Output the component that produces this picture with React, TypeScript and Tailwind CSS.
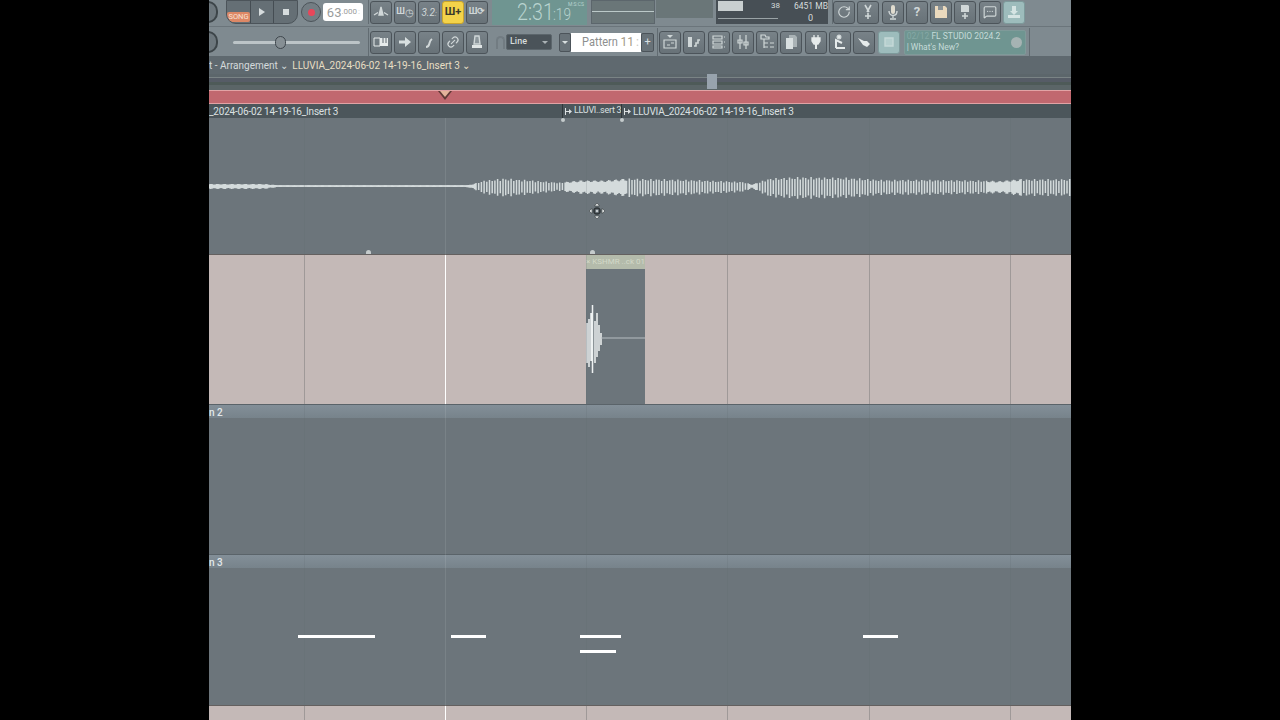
import { FC, ReactNode } from "react";
import { Link2, MessageSquareMore, RotateCw } from "lucide-react";

const FONT = "font-['Roboto',sans-serif]";

// fake waveform, built from an envelope of [x, amplitude] points
const ENVELOPE: [number, number][] = [
  [0, 3], [55, 3], [70, 1], [255, 1], [262, 2], [275, 8], [295, 11], [325, 8], [350, 5],
  [372, 8], [395, 8], [420, 11], [480, 9], [535, 6], [543, 2], [560, 11], [590, 13], [640, 12],
  [672, 9], [720, 9], [775, 8], [790, 7], [812, 10], [862, 10],
];

const ampAt = (x: number) => {
  for (let i = 1; i < ENVELOPE.length; i++) {
    const [x0, a0] = ENVELOPE[i - 1];
    const [x1, a1] = ENVELOPE[i];
    if (x <= x1) return a0 + ((a1 - a0) * (x - x0)) / (x1 - x0);
  }
  return 1;
};

const buildWave = () => {
  let d = "";
  let x = 0;
  while (x < 862) {
    const base = ampAt(x);
    const a = base * (0.85 + 0.15 * Math.sin(x * 0.9));
    d += `M${x.toFixed(1)} ${(14 - a * 0.7).toFixed(1)}V${(14 + a).toFixed(1)}`;
    const dense = base < 4 || (x > 355 && x < 417) || (x > 775 && x < 812);
    x += dense ? 1.5 : 2.7;
  }
  return d;
};

const ToolButton: FC<{ children?: ReactNode; tone?: "dark" | "yellow" | "teal" }> = ({ children, tone = "dark" }) => (
  <div
    className={`flex h-[23px] w-[22px] shrink-0 items-center justify-center rounded-[3px] border text-[10px] font-bold ${
      tone === "yellow"
        ? "border-[#c9a52c] bg-[#f3d34a] text-[#3b3a2c]"
        : tone === "teal"
          ? "border-[#7d9a9b] bg-[#9dbcbc] text-[#d5e4e3]"
          : "border-[#4c545a] bg-gradient-to-b from-[#788288] to-[#687278] text-[#d0d7d8]"
    }`}
  >
    {children}
  </div>
);

const Knob: FC = () => (
  <div className="ml-[-11px] h-[22px] w-[20px] shrink-0 rounded-full border-2 border-[#3d4549] bg-[#6d777d]" />
);

const Icon: FC<{ children: ReactNode }> = ({ children }) => (
  <svg viewBox="0 0 16 16" className="h-[16px] w-[16px]" fill="none" stroke="#d0d7d8" strokeWidth="1.4">
    {children}
  </svg>
);

const Toolbar: FC = () => (
  <div className={`flex h-[56px] shrink-0 flex-col bg-[#7f8a90] ${FONT}`}>
    {/* first row */}
    <div className="flex h-[27px] items-center border-b border-[#6b757b] pb-[2px]">
      <Knob />
      <div className="ml-[8px] flex h-[24px] w-[72px] overflow-hidden rounded-b-[10px] border border-[#4c545a] bg-[#656f75]">
        <div className="flex w-[24px] items-end justify-center border-r border-[#454d53] pb-[1px]">
          <span className="rounded-[2px] bg-[#dd8866] px-[1px] text-[7.5px] leading-[10px] text-[#f8e3d6]">SONG</span>
        </div>
        <div className="flex w-[23px] items-center justify-center border-r border-[#454d53]">
          <div className="h-0 w-0 border-y-[4px] border-l-[6px] border-y-transparent border-l-[#d6dcdd]" />
        </div>
        <div className="flex flex-1 items-center justify-center">
          <div className="h-[6px] w-[6px] bg-[#d6dcdd]" />
        </div>
      </div>
      <div className="ml-[3px] flex h-[20px] w-[20px] items-center justify-center rounded-full border border-[#4c545a] bg-[#737d83]">
        <div className="h-[7px] w-[7px] rounded-full bg-[#e8465a]" />
      </div>
      <div className="ml-[2px] flex h-[18px] w-[40px] items-center justify-end rounded-[3px] bg-white pr-[3px] text-[#9a9c9c]">
        <span className="text-[13px] leading-none">63</span>
        <span className="text-[8px] leading-none">.000</span>
        <span className="ml-[1px] text-[8px] leading-none text-[#c9cccc]">:</span>
      </div>
      <div className="ml-[5px] h-full w-px bg-[#626c72]" />
      <div className="ml-[1px] flex w-[121px] gap-[2px]">
        <ToolButton>
          <Icon>
            <path d="M1 11 5 8.500M15 11l-4-2.500" />
            <path d="M8 3l2 8H6z" fill="#d0d7d8" />
          </Icon>
        </ToolButton>
        <ToolButton>
          <span className="flex items-center text-[9px]">
            Ш<span className="text-[10px] font-normal">◷</span>
          </span>
        </ToolButton>
        <ToolButton>
          <span className="text-[10px] font-normal italic">
            3.2<span className="text-[7px]">:</span>
          </span>
        </ToolButton>
        <ToolButton tone="yellow">
          <span className="text-[11px]">Ш+</span>
        </ToolButton>
        <ToolButton>
          <span className="flex items-center text-[9px]">
            Ш<span className="text-[9px]">⟳</span>
          </span>
        </ToolButton>
      </div>
      {/* clock */}
      <div className="relative ml-[1px] flex h-[25px] w-[95px] items-start bg-[#6f9591] pl-[25px] text-[#b8d3cf]">
        <span className="origin-left scale-x-[0.82] text-[24px] leading-[24px] font-light">2:31</span>
        <span className="ml-[-9px] mt-[6px] origin-left scale-x-[0.85] text-[16px] leading-[18px] font-light">:19</span>
        <span className="absolute right-[3px] top-[1px] text-[5px] leading-[6px]">M:S:CS</span>
      </div>
      <div className="ml-[4px] flex h-[24px] w-[64px] items-center border border-[#5c666c] bg-[#6a7678]">
        <div className="mt-[-2px] h-px w-full bg-[#bcc9c9]" />
      </div>
      <div className="ml-px h-[18px] w-[57px] self-start bg-[#6a7678]" />
      <div className="ml-[3px] flex h-[24px] w-[112px] flex-col whitespace-nowrap bg-[#474f55] text-[#d6dcdc]">
        <div className="flex h-[12px] items-center">
          <div className="ml-[2px] h-[10px] w-[25px] bg-[#c9cfd0]" />
          <span className="ml-[28px] text-[8px] leading-none">38</span>
          <span className="ml-[14px] text-[8.5px] leading-none">6451 MB</span>
        </div>
        <div className="flex h-[12px] items-center pr-[15px]">
          <div className="ml-[2px] mr-auto h-px w-[60px] bg-[#9aa3a6]" />
          <span className="text-[9px] leading-none">0</span>
        </div>
      </div>
      <div className="ml-[4px] h-full w-px bg-[#626c72]" />
      <div className="flex gap-[2.300px]">
        <ToolButton>
          <RotateCw size={14} strokeWidth={2} />
        </ToolButton>
        <ToolButton>
          <Icon>
            <path d="M5 1l4 7M11 1 7 8M8 9v6M5 12h6" strokeWidth="1.6" />
          </Icon>
        </ToolButton>
        <ToolButton>
          <Icon>
            <rect x="6" y="1" width="4" height="9" rx="2" fill="#e0dccf" stroke="none" />
            <path d="M4 7c0 6 8 6 8 0M8 11v3M5 15h6" />
          </Icon>
        </ToolButton>
        <ToolButton>
          <span className="text-[13px]">?</span>
        </ToolButton>
        <ToolButton>
          <Icon>
            <path d="M2 2h10l2 2v10H2z" fill="#ead9bd" stroke="none" />
            <path d="M5 2h5v4H5z" fill="#8a9296" stroke="none" />
          </Icon>
        </ToolButton>
        <ToolButton>
          <Icon>
            <path d="M4 1h7l1 1v6H4z" fill="#d0d7d8" stroke="none" />
            <path d="M8 9v6M5 12h6" strokeWidth="1.6" />
          </Icon>
        </ToolButton>
        <ToolButton>
          <MessageSquareMore size={14} strokeWidth={2} />
        </ToolButton>
        <ToolButton tone="teal">
          <Icon>
            <path d="M6 2h4v5h2l-4 4-4-4h2z" fill="#d5e4e3" stroke="none" />
            <path d="M2 11h12v3H2z" fill="#d5e4e3" stroke="none" />
          </Icon>
        </ToolButton>
      </div>
    </div>

    {/* second row */}
    <div className="flex h-[29px] items-center pt-[1px]">
      <Knob />
      <div className="relative ml-[15px] h-[3px] w-[127px] rounded-full bg-[#bcc4c7]">
        <div className="absolute left-[42px] top-[-5px] h-[13px] w-[11px] rounded-full border border-[#3f474d] bg-[#868f94]" />
      </div>
      <div className="ml-[8px] h-full w-px bg-[#626c72]" />
      <div className="ml-[1px] flex gap-[2px]">
        <ToolButton>
          <Icon>
            <path d="M1 4h6v8H1z" stroke="#e6ebeb" strokeWidth="1" />
            <path d="M7 4h8v8H7z" fill="#e6ebeb" stroke="none" />
            <path d="M10 4v5M13 4v5" stroke="#5f696f" strokeWidth="1" />
          </Icon>
        </ToolButton>
        <ToolButton>
          <Icon>
            <path d="M2 6.500h6V3l6 5-6 5V9.500H2z" fill="#d8dfe0" stroke="none" />
          </Icon>
        </ToolButton>
        <ToolButton>
          <Icon>
            <path d="M5 13c3 0 3-2 3.500-4s1-3 2.500-4" strokeWidth="2" />
          </Icon>
        </ToolButton>
        <ToolButton>
          <Link2 size={14} strokeWidth={2} className="-rotate-45" />
        </ToolButton>
        <ToolButton>
          <Icon>
            <path d="M6 2h4l1 8H5z" fill="#8d979c" />
            <path d="M3 14h10v-3H3z" fill="#e0e5e5" stroke="none" />
          </Icon>
        </ToolButton>
      </div>
      <div className="ml-[8px] h-[13px] w-[9px] rounded-t-full border-2 border-b-0 border-[#727c82]" />
      <div className="ml-[1px] flex h-[16px] w-[46px] items-center justify-between rounded-[2px] border border-[#5c666c] bg-[#4a5359] px-[3px] text-[#d6dcdc]">
        <span className="text-[9px] font-medium">Line</span>
        <div className="h-0 w-0 border-x-[3px] border-t-[3px] border-x-transparent border-t-[#aab2b5]" />
      </div>
      <div className="ml-[7px] flex h-[19px] w-[12px] items-center justify-center rounded-[2px] border border-[#4c545a] bg-[#687278]">
        <div className="h-0 w-0 border-x-[3px] border-t-[3px] border-x-transparent border-t-[#d8dfe0]" />
      </div>
      <div className="flex h-[19px] w-[70px] items-center justify-end whitespace-nowrap bg-white pr-[2px] text-[12px] text-[#8d8f8f]">
        <span className="origin-right scale-x-[0.92]">Pattern</span>
        <span className="ml-[3px] text-[#a39a85]">11</span>
        <span className="ml-[2px] text-[#c9c9c0]">:</span>
      </div>
      <div className="flex h-[19px] w-[13px] items-center justify-center rounded-[2px] border border-[#4c545a] bg-[#687278] text-[11px] text-[#d8dfe0]">
        +
      </div>
      <div className="ml-[3px] h-full w-px bg-[#626c72]" />
      <div className="ml-[1px] flex gap-[2.300px]">
        <ToolButton>
          <Icon>
            <path d="M2 6h12v8H2zM5 11h3M9 9h3" strokeWidth="1.2" />
            <path d="M5 1h6L8 4z" fill="#d0d7d8" stroke="none" />
          </Icon>
        </ToolButton>
        <ToolButton>
          <Icon>
            <path d="M2 3h4v10H2z" fill="#d0d7d8" stroke="none" />
            <path d="M8 12h2V9h2V6h2" strokeWidth="1.6" />
          </Icon>
        </ToolButton>
        <ToolButton>
          <Icon>
            <path d="M2 2h9v3H2zM2 7h9v3H2zM2 12h9v2H2zM13 3h1M13 8h1M13 13h1" strokeWidth="1.2" />
          </Icon>
        </ToolButton>
        <ToolButton>
          <Icon>
            <path d="M5 1v14M11 1v14M3 6h4v3H3zM9 8h4v3H9z" strokeWidth="1.2" />
          </Icon>
        </ToolButton>
        <ToolButton>
          <Icon>
            <path d="M2 1h4l1 2h3v2H2zM5 5v9M5 9h4M5 13h4M11 9h4M11 13h4" strokeWidth="1.2" />
          </Icon>
        </ToolButton>
        <ToolButton>
          <Icon>
            <path d="M6 1h6l2 2v10H6z" fill="#aab3b6" stroke="none" />
            <path d="M3 4h7v11H3z" fill="#d8dfe0" stroke="none" />
          </Icon>
        </ToolButton>
        <ToolButton>
          <Icon>
            <path d="M6 1v3M10 1v3M4 4h8v3l-2 3H6L4 7z" fill="#e6ebeb" stroke="#e6ebeb" strokeWidth="1.3" />
            <path d="M8 10v5" stroke="#e6ebeb" strokeWidth="2" />
          </Icon>
        </ToolButton>
        <ToolButton>
          <Icon>
            <circle cx="7" cy="3" r="1.800" fill="#e6ebeb" />
            <path d="M4 14V6l6 3M4 14h9" strokeWidth="2" stroke="#e6ebeb" />
          </Icon>
        </ToolButton>
        <ToolButton>
          <Icon>
            <path d="M2 4l6 3h3l3 3-3 3-4-2z" fill="#e6ebeb" stroke="none" />
          </Icon>
        </ToolButton>
        <ToolButton tone="teal">
          <Icon>
            <path d="M4 4h8v8H4z" fill="#b5cfce" stroke="#c5d9d8" />
          </Icon>
        </ToolButton>
      </div>
      <div className="ml-[4px] flex h-[25px] w-[122px] items-center justify-between rounded-[2px] border border-[#7f9a99] bg-[#6f9591] pl-[2px] pr-[3px] text-[#c5dbd8]">
        <div className="flex flex-col whitespace-nowrap text-[8.5px] leading-[11px]">
          <span>
            <span className="text-[#85a8a5]">02/12</span> FL STUDIO 2024.2
          </span>
          <span>| What's New?</span>
        </div>
        <div className="h-[11px] w-[11px] rounded-full bg-[#a6b3b3]" />
      </div>
      <div className="ml-[3px] h-full w-px bg-[#626c72]" />
    </div>
  </div>
);

const GRID_LINES = [95, 377, 518, 660, 801];

// vertical beat lines and the playhead, laid over the lanes
const GridOverlay: FC = () => (
  <div className="pointer-events-none absolute inset-0">
    {GRID_LINES.map((x) => (
      <div key={x} className="absolute inset-y-0 w-px bg-[#5f686e30]" style={{ left: x }} />
    ))}
    <div className="absolute inset-y-0 left-[236px] w-px bg-[#ffffff18]" />
  </div>
);

const TrackHeader: FC<{ label: string }> = ({ label }) => (
  <div className="flex h-[14px] shrink-0 items-center border-t border-[#5a6369] bg-gradient-to-b from-[#838f98] to-[#77838b] pt-[1px] text-[10px] font-medium text-[#e3e8ea]">
    {label}
  </div>
);

const Marker: FC<{ className: string }> = ({ className }) => (
  <div className={`absolute h-[4px] w-[5px] rounded-t-full bg-[#c5cbcc] ${className}`} />
);

const MoveCursor: FC = () => (
  <svg viewBox="0 0 18 18" className="absolute left-[379px] top-[84px] h-[18px] w-[18px]">
    <path d="M9 1 11.500 4H6.500zM9 17 6.500 14h5zM1 9 4 6.500v5zM17 9 14 11.500v-5z" fill="#f2f5f5" stroke="#2f3538" strokeWidth="0.6" />
    <circle cx="9" cy="9" r="3" fill="none" stroke="#2f3538" strokeWidth="1.6" />
    <circle cx="9" cy="9" r="1" fill="#e5e9e9" />
  </svg>
);

const ClipArrow: FC = () => (
  <svg viewBox="0 0 7 7" className="mr-[2px] h-[7px] w-[7px] shrink-0" fill="#dbe0e1">
    <path d="M0 0h1v7H0zM1 3h3V1l3 2.500L4 6V4H1z" />
  </svg>
);

const Lane: FC<{ height: string; children?: ReactNode }> = ({ height, children }) => (
  <div className={`relative shrink-0 bg-[#6c757b] ${height}`}>{children}</div>
);

const Note: FC<{ className: string }> = ({ className }) => <div className={`absolute z-10 h-[3px] bg-white ${className}`} />;

const PinkLane: FC<{ className: string; children?: ReactNode }> = ({ className, children }) => (
  <div className={`relative border-t border-[#64605f] bg-[#c4b9b7] ${className}`}>
    {GRID_LINES.map((x) => (
      <div key={x} className="absolute inset-y-0 w-px bg-[#aea4a2]" style={{ left: x }} />
    ))}
    <div className="absolute inset-y-0 left-[236px] w-px bg-white" />
    {children}
  </div>
);

const Playlist: FC = () => (
  <div className={`relative flex flex-1 flex-col overflow-hidden bg-[#6c757b] ${FONT}`}>
    {/* title */}
    <div className="flex h-[18px] shrink-0 items-center bg-[#5f696f] text-[10px]">
      <span className="text-[#d5dadb]">t - Arrangement ⌄</span>
      <span className="ml-[4px] text-[#e8dfc4]">LLUVIA_2024-06-02 14-19-16_Insert 3 ⌄</span>
    </div>
    {/* overview */}
    <div className="relative flex h-[16px] shrink-0 flex-col bg-[#5c666b] pt-[3px]">
      <div className="h-[1px] bg-[#7a8385]" />
      <div className="h-[4px] bg-[#565c66]" />
      <div className="h-[3px] bg-[#4e5a58]" />
      <div className="h-[5px] bg-[#5b6567]" />
      <div className="absolute left-[498px] top-0 h-[15px] w-[10px] bg-[#98a3ad]" />
    </div>
    {/* loop bar */}
    <div className="relative h-[14px] shrink-0 border-y border-[#e2a3a5] bg-[#c1686f]">
      <div className="absolute left-[229px] top-0 h-0 w-0 border-x-[7px] border-t-[9px] border-x-transparent border-t-[#5f3a36]" />
      <div className="absolute left-[231px] top-0 h-0 w-0 border-x-[5px] border-t-[6px] border-x-transparent border-t-[#e4b39a]" />
    </div>
    {/* clip names */}
    <div className="relative flex h-[14px] shrink-0 items-center bg-[#4c565b] text-[10px] tracking-[-0.2px] text-[#dbe0e1]">
      <span className="w-[353px] whitespace-nowrap">_2024-06-02 14-19-16_Insert 3</span>
      <div className="h-full w-px bg-[#30373b]" />
      <span className="flex w-[58px] items-center whitespace-nowrap pl-[2px] text-[9px] tracking-[-0.3px]">
        <ClipArrow />
        LLUVI..sert 3
      </span>
      <div className="h-full w-px bg-[#30373b]" />
      <span className="flex items-center whitespace-nowrap pl-[2px]">
        <ClipArrow />
        LLUVIA_2024-06-02 14-19-16_Insert 3
      </span>
    </div>

    <div className="relative flex flex-1 flex-col">
      {/* audio lane */}
      <Lane height="h-[136px]">
        <svg viewBox="0 0 862 30" className="absolute left-0 top-[54px] h-[30px] w-[862px]" stroke="#d4dbdc" strokeWidth="1.5" fill="none">
          <path d={buildWave()} />
          <path d="M0 14H260" strokeWidth="1.5" />
          <path d="M358 14h58" strokeWidth="3.5" />
        </svg>
        <Marker className="left-[157px] bottom-0" />
        <Marker className="left-[381px] bottom-0" />
        <div className="absolute left-[352px] top-0 h-[4px] w-[4px] rounded-full bg-[#c5cbcc]" />
        <div className="absolute left-[411px] top-0 h-[4px] w-[4px] rounded-full bg-[#c5cbcc]" />
        <MoveCursor />
      </Lane>

      {/* pink lane with the kick sample */}
      <PinkLane className="h-[150px] shrink-0">
        <div className="absolute inset-y-0 left-[377px] w-[59px] bg-[#6c757b]">
          <div className="flex h-[14px] items-center justify-center overflow-hidden whitespace-nowrap bg-[#b4bbab] text-[8px] text-[#d3d9c8]">
            × KSHMR ..ck 01
          </div>
          <svg viewBox="0 0 59 72" className="absolute left-0 top-[48px] h-[72px] w-[59px]" stroke="#eef2f2" strokeWidth="1.5" fill="none">
            <path d="M1 20V60M3 16V64M5 10V58M6.500 2V70M9 18V60M11 10V54M13 22V48M15 30V42" />
            <path d="M15 35H59" stroke="#b5bec2" strokeWidth="1.2" />
          </svg>
        </div>
      </PinkLane>

      <TrackHeader label="n 2" />
      <Lane height="h-[136px]" />
      <TrackHeader label="n 3" />
      <Lane height="h-[137px]">
        <Note className="left-[89px] top-[67px] w-[77px]" />
        <Note className="left-[242px] top-[67px] w-[35px]" />
        <Note className="left-[371px] top-[67px] w-[41px]" />
        <Note className="left-[371px] top-[82px] w-[36px]" />
        <Note className="left-[654px] top-[67px] w-[35px]" />
      </Lane>
      <PinkLane className="flex-1" />
      <GridOverlay />
    </div>
  </div>
);

const App: FC = () => (
  <div className="flex h-[720px] w-[1280px] justify-center overflow-hidden bg-black">
    <div className="flex h-full w-[862px] flex-col overflow-hidden">
      <Toolbar />
      <Playlist />
    </div>
  </div>
);

export default App;
